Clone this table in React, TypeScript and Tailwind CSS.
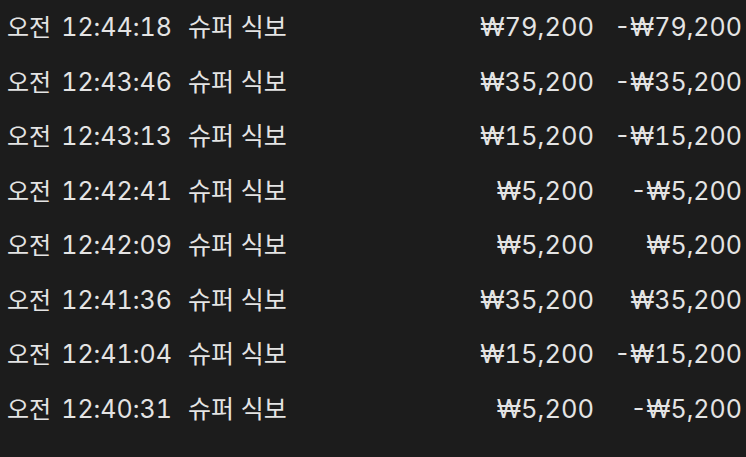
import React from "react";

const rows = [
  { time: "12:44:18", amount: "₩79,200", net: "-₩79,200" },
  { time: "12:43:46", amount: "₩35,200", net: "-₩35,200" },
  { time: "12:43:13", amount: "₩15,200", net: "-₩15,200" },
  { time: "12:42:41", amount: "₩5,200", net: "-₩5,200" },
  { time: "12:42:09", amount: "₩5,200", net: "₩5,200" },
  { time: "12:41:36", amount: "₩35,200", net: "₩35,200" },
  { time: "12:41:04", amount: "₩15,200", net: "-₩15,200" },
  { time: "12:40:31", amount: "₩5,200", net: "-₩5,200" },
];

export default function App() {
  return (
    <div
      className="w-[746px] h-[457px] overflow-hidden bg-[#1c1c1c] text-[#e4e4e4] text-[25px] tabular-nums"
      style={{ fontFamily: '"Inter", "Noto Sans CJK KR", sans-serif' }}
    >
      <div className="-mt-[1px]">
        {rows.map((r) => (
          <div key={r.time} className="flex items-baseline h-[54.5px] pt-[9px] pl-[7px] pr-[4px]">
            <span className="w-[181px] whitespace-nowrap">
              <span className="text-[24px]">오전</span>
              <span className="ml-[10px] text-[25px]">{r.time}</span>
            </span>
            <span className="flex-1 whitespace-nowrap text-[25px]">슈퍼 식보</span>
            <span className="text-right whitespace-nowrap mr-[-2px] text-[25.5px]">{r.amount}</span>
            <span className="w-[150px] text-right whitespace-nowrap">{r.net}</span>
          </div>
        ))}
      </div>
    </div>
  );
}
